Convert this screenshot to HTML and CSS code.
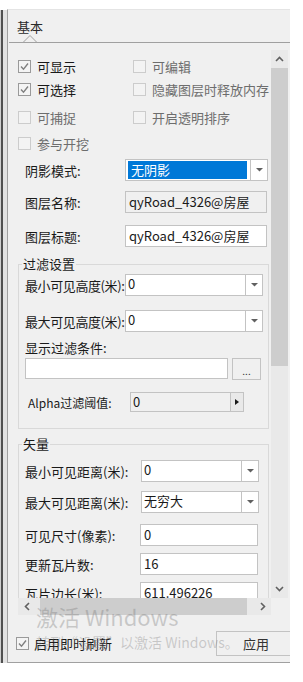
FILE: index.html
```html
<!DOCTYPE html>
<html lang="zh-CN">
  <head>
    <meta charset="UTF-8">
    <meta name="viewport" content="width=device-width, initial-scale=1.0">
    <title>图层属性</title>
    <link rel="stylesheet" href="styles.css">
  </head>
  <body>
    <div class="window">
      <div class="edge"></div>
      <div class="panel">
        <div class="tabs">
          <span class="tab">基本</span>
          <svg class="tab-caret" width="16" height="8" viewBox="0 0 16 8"><polyline points="0,7.5 7,0.5 14,7.5" fill="none" stroke="#a0a0a0"/></svg>
        </div>

        <div class="scroll-row">
          <div class="viewport">
            <!-- checkbox block -->
            <div class="checks">
              <div class="check"><span class="box checked"><svg width="11" height="11" viewBox="0 0 11 11"><polyline points="2,5.5 4.5,8.2 9,2.5" fill="none" stroke="#808080" stroke-width="1.4"/></svg></span>可显示</div>
              <div class="check off"><span class="box"></span>可编辑</div>
              <div class="check"><span class="box checked"><svg width="11" height="11" viewBox="0 0 11 11"><polyline points="2,5.5 4.5,8.2 9,2.5" fill="none" stroke="#808080" stroke-width="1.4"/></svg></span>可选择</div>
              <div class="check off"><span class="box"></span>隐藏图层时释放内存</div>
              <div class="check off"><span class="box"></span>可捕捉</div>
              <div class="check off"><span class="box"></span>开启透明排序</div>
              <div class="check off"><span class="box"></span>参与开挖</div>
            </div>

            <div class="form-row row-shadow">
              <span class="lbl">阴影模式:</span>
              <div class="combo combo-wide">
                <div class="combo-val"><span class="selected">无阴影</span></div>
                <div class="combo-btn"><svg width="7" height="4" viewBox="0 0 7 4"><polygon points="0,0 7,0 3.5,3.5" fill="#606060"/></svg></div>
              </div>
            </div>
            <div class="form-row row-name">
              <span class="lbl">图层名称:</span>
              <div class="text text-wide readonly">qyRoad_4326@房屋</div>
            </div>
            <div class="form-row row-title">
              <span class="lbl">图层标题:</span>
              <div class="text text-wide">qyRoad_4326@房屋</div>
            </div>

            <fieldset class="group group-filter">
              <legend>过滤设置</legend>
              <div class="group-row">
                <span class="lbl tight">最小可见高度(米):</span>
                <div class="combo combo-mid">
                  <div class="combo-val">0</div>
                  <div class="combo-btn"><svg width="7" height="4" viewBox="0 0 7 4"><polygon points="0,0 7,0 3.5,3.5" fill="#606060"/></svg></div>
                </div>
              </div>
              <div class="group-row row-maxh">
                <span class="lbl tight">最大可见高度(米):</span>
                <div class="combo combo-mid">
                  <div class="combo-val">0</div>
                  <div class="combo-btn"><svg width="7" height="4" viewBox="0 0 7 4"><polygon points="0,0 7,0 3.5,3.5" fill="#606060"/></svg></div>
                </div>
              </div>
              <p class="filter-lbl">显示过滤条件:</p>
              <div class="filter-row">
                <div class="text text-filter"></div>
                <div class="dots-btn">...</div>
              </div>
              <div class="alpha-row">
                <span class="alpha-lbl">Alpha过滤阈值:</span>
                <div class="alpha-box">0</div>
                <div class="spin-btn"><svg width="4" height="6" viewBox="0 0 4 6"><polygon points="0,0 4,3 0,6" fill="#1a1a1a"/></svg></div>
              </div>
            </fieldset>

            <fieldset class="group group-vector">
              <legend>矢量</legend>
              <div class="vec-row">
                <span class="lbl">最小可见距离(米):</span>
                <div class="combo combo-vec">
                  <div class="combo-val">0</div>
                  <div class="combo-btn"><svg width="7" height="4" viewBox="0 0 7 4"><polygon points="0,0 7,0 3.5,3.5" fill="#606060"/></svg></div>
                </div>
              </div>
              <div class="vec-row row-maxd">
                <span class="lbl">最大可见距离(米):</span>
                <div class="combo combo-vec">
                  <div class="combo-val">无穷大</div>
                  <div class="combo-btn"><svg width="7" height="4" viewBox="0 0 7 4"><polygon points="0,0 7,0 3.5,3.5" fill="#606060"/></svg></div>
                </div>
              </div>
              <div class="vec-row row-size">
                <span class="lbl">可见尺寸(像素):</span>
                <div class="text text-vec">0</div>
              </div>
              <div class="vec-row row-tiles">
                <span class="lbl">更新瓦片数:</span>
                <div class="text text-vec">16</div>
              </div>
              <div class="vec-row row-tiles">
                <span class="lbl">瓦片边长(米):</span>
                <div class="text text-vec">611.496226</div>
              </div>
            </fieldset>
          </div>

          <div class="vscroll">
            <div class="sb-btn"><svg width="9" height="6" viewBox="0 0 9 6"><polyline points="1,5 4.5,1.5 8,5" fill="none" stroke="#606060" stroke-width="1.6"/></svg></div>
            <div class="vthumb"></div>
            <div class="sb-track"></div>
            <div class="sb-btn"><svg width="9" height="6" viewBox="0 0 9 6"><polyline points="1,1 4.5,4.5 8,1" fill="none" stroke="#606060" stroke-width="1.6"/></svg></div>
          </div>
        </div>

        <div class="hscroll">
          <div class="sb-btn-h"><svg width="6" height="9" viewBox="0 0 6 9"><polyline points="5,1 1.5,4.5 5,8" fill="none" stroke="#606060" stroke-width="1.6"/></svg></div>
          <div class="hthumb"></div>
          <div class="sb-track"></div>
          <div class="sb-btn-h"><svg width="6" height="9" viewBox="0 0 6 9"><polyline points="1,1 4.5,4.5 1,8" fill="none" stroke="#606060" stroke-width="1.6"/></svg></div>
        </div>

        <div class="bottom">
          <div class="check live"><span class="box checked"><svg width="11" height="11" viewBox="0 0 11 11"><polyline points="2,5.5 4.5,8.2 9,2.5" fill="none" stroke="#808080" stroke-width="1.4"/></svg></span>启用即时刷新</div>
          <button class="apply">应用</button>
        </div>
      </div>

      <!-- activation watermark on top of everything -->
      <div class="watermark">
        <div class="wm-big">激活 Windows</div>
        <div class="wm-small">转到“设置”以激活 Windows。</div>
      </div>
    </div>
  </body>
</html>
```

FILE: styles.css
```css
body {
    margin: 0;
    background-color: #fff;
    font-family: "Microsoft YaHei", "Noto Sans CJK SC", sans-serif;
    font-size: 13px;
    color: #1a1a1a;
}

.window {
    position: relative;
    display: flex;
    width: 290px;
    height: 654px;
    margin-top: 9px;
}

.edge {
    width: 7px;
    margin-top: 1px;
    background: linear-gradient(to right, #cfcfcf 0 1px, #505050 1px 3px, #e2e2e2 3px 7px);
}

.panel {
    flex: 1;
    display: flex;
    flex-direction: column;
    overflow: hidden;
    background-color: #f0f0f0;
    border-top: 1px solid #e4e4e4;
    border-left: 1px solid #a0a0a0;
    border-bottom: 1px solid #a0a0a0;
}

/* tab header */
.tabs {
    position: relative;
    height: 32px;
    margin-left: 1px;
    border-bottom: 1px solid #a0a0a0;
}

.tab {
    display: inline-block;
    padding: 8px 0 0 8px;
    line-height: 18px;
    color: #2a2a2a;
}

.tab-caret {
    position: absolute;
    left: 14px;
    bottom: -1px;
}

/* scrolling area */
.scroll-row {
    display: flex;
    height: 548px;
    margin-top: 7px;
}

.viewport {
    width: 263px;
    overflow: hidden;
}

.vscroll {
    width: 17px;
    display: flex;
    flex-direction: column;
    background-color: #e9e9e9;
}

.sb-btn {
    height: 18px;
    display: flex;
    align-items: center;
    justify-content: center;
}

.vthumb {
    height: 298px;
    background-color: #cdcdcd;
}

.sb-track {
    flex: 1;
}

.hscroll {
    display: flex;
    width: 253px;
    height: 17px;
    margin-left: 10px;
    background-color: #e9e9e9;
}

.sb-btn-h {
    width: 17px;
    display: flex;
    align-items: center;
    justify-content: center;
}

.hthumb {
    width: 207px;
    margin-left: 5px;
    background-color: #cdcdcd;
}

/* checkboxes */
.checks {
    display: grid;
    grid-template-columns: 115px auto;
    grid-template-rows: 23px 28px 26px 20px;
    margin-top: 6px;
    padding-left: 10px;
}

.check {
    display: flex;
    align-items: center;
    height: 20px;
    white-space: nowrap;
}

.check.off {
    color: #6d6d6d;
}

.box {
    width: 13px;
    height: 13px;
    box-sizing: border-box;
    margin-right: 6px;
    border: 1px solid #cccccc;
    background-color: #f3f3f3;
    display: flex;
    align-items: center;
    justify-content: center;
}

.box.checked {
    border-color: #9a9a9a;
    background-color: #f4f4f4;
}

/* form rows */
.form-row {
    display: flex;
    align-items: center;
    padding-left: 17px;
}

.lbl {
    flex-shrink: 0;
    width: 100px;
    white-space: nowrap;
}

.lbl.tight {
    letter-spacing: -0.4px;
}

.row-shadow {
    margin-top: 6px;
}

.row-name {
    margin-top: 10px;
}

.row-title {
    margin-top: 12px;
}

.combo {
    display: flex;
    height: 22px;
    box-sizing: border-box;
    border: 1px solid #c3c3c3;
    background-color: #fff;
}

.combo-val {
    flex: 1;
    padding-left: 2px;
    line-height: 18px;
    overflow: hidden;
    white-space: nowrap;
}

.combo-btn {
    width: 16px;
    border-left: 1px solid #c3c3c3;
    display: flex;
    align-items: center;
    justify-content: center;
}

.combo-wide {
    width: 143px;
}

.combo-wide .combo-val {
    padding: 1px 3px 1px 2px;
}

.selected {
    display: block;
    height: 18px;
    padding-left: 3px;
    line-height: 18px;
    background-color: #0078d7;
    color: #fff;
}

.text {
    height: 22px;
    box-sizing: border-box;
    padding-left: 3px;
    border: 1px solid #c3c3c3;
    background-color: #fff;
    line-height: 20px;
    white-space: nowrap;
    overflow: hidden;
}

.text.readonly {
    background-color: #f0f0f0;
}

.text-wide {
    width: 142px;
}

/* group boxes */
.group {
    width: 251px;
    box-sizing: border-box;
    min-width: 0;
    margin: 8px 0 0 10px;
    padding: 1px 0 16px 6px;
    border: 1px solid #d9d9d9;
}

.group legend {
    margin-left: -3px;
    padding: 0 1px;
    line-height: 18px;
}

.group-row,
.vec-row {
    display: flex;
    align-items: center;
}

.combo-mid {
    width: 138px;
}

.row-maxh {
    margin-top: 14px;
}

.filter-lbl {
    margin: 8px 0 0 0;
    line-height: 16px;
}

.filter-row {
    display: flex;
    margin-top: 2px;
}

.text-filter {
    width: 203px;
    height: 21px;
}

.dots-btn {
    width: 29px;
    height: 22px;
    box-sizing: border-box;
    margin-left: 4px;
    border: 1px solid #c3c3c3;
    font-size: 10px;
    line-height: 24px;
    text-align: center;
    color: #333;
}

.alpha-row {
    display: flex;
    align-items: center;
    margin-top: 12px;
    padding-left: 3px;
}

.alpha-lbl {
    width: 102px;
    font-size: 12px;
    white-space: nowrap;
}

.alpha-box {
    width: 101px;
    height: 20px;
    box-sizing: border-box;
    padding-left: 2px;
    border: 1px solid #c3c3c3;
    line-height: 18px;
}

.spin-btn {
    width: 13px;
    height: 20px;
    box-sizing: border-box;
    border: 1px solid #c3c3c3;
    border-left: none;
    background-color: #e9e9e9;
    display: flex;
    align-items: center;
    justify-content: center;
}

.group-vector {
    margin-top: 6px;
    padding-top: 7px;
    padding-bottom: 40px;
}

.vec-row .lbl {
    width: 116px;
}

.combo-vec {
    width: 118px;
}

.text-vec {
    width: 118px;
    margin-left: -1px;
}

.row-maxd {
    margin-top: 9px;
}

.row-size {
    margin-top: 11px;
}

.row-tiles {
    margin-top: 7px;
}

/* bottom bar */
.bottom {
    display: flex;
    align-items: center;
    height: 47px;
    box-sizing: border-box;
    padding: 16px 0 6px 8px;
}

.check.live .box {
    margin-right: 5px;
}

.apply {
    width: 80px;
    height: 25px;
    margin-left: auto;
    margin-right: -6px;
    padding: 0 0 0 26px;
    border: 1px solid #c3c3c3;
    background-color: #f0f0f0;
    font-family: inherit;
    font-size: 13px;
    color: #333;
    text-align: left;
}

.watermark {
    position: absolute;
    left: 36px;
    top: 594px;
    color: rgba(120, 120, 120, 0.34);
    white-space: nowrap;
    pointer-events: none;
}

.wm-big {
    font-size: 22px;
    line-height: 26px;
}

.wm-small {
    margin-top: 4px;
    font-size: 14px;
    line-height: 18px;
}
```
